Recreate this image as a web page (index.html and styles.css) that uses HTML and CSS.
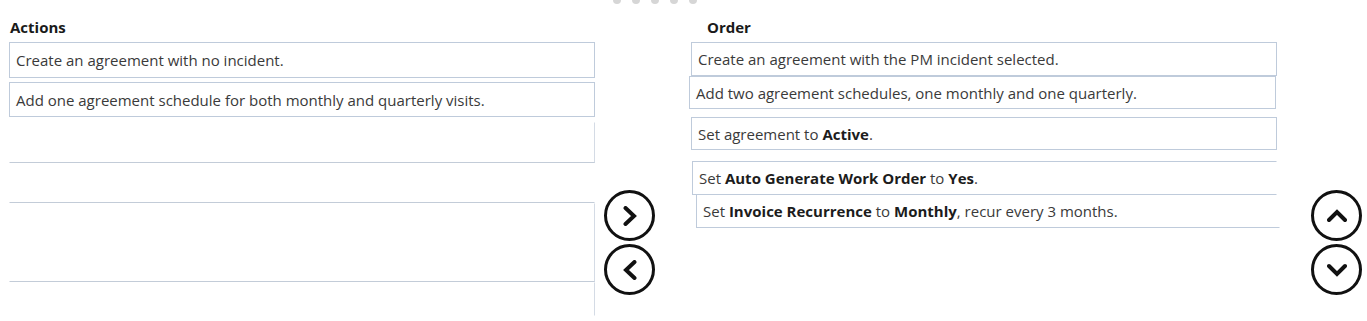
FILE: index.html
```html
<!DOCTYPE html>
<html lang="en">
<head>
  <meta charset="UTF-8">
  <meta name="viewport" content="width=device-width, initial-scale=1.0">
  <title>Agreement steps</title>
  <link rel="stylesheet" href="styles.css">
</head>
<body>
  <div class="loader">
    <span></span><span></span><span></span><span></span><span></span>
  </div>

  <main class="board">
    <section class="pane pane-actions">
      <h2 class="pane-title">Actions</h2>
      <div class="slot slot-1">Create an agreement with no incident.</div>
      <div class="slot slot-2">Add one agreement schedule for both monthly and quarterly visits.</div>
      <div class="slot empty empty-1"></div>
      <div class="slot empty empty-2"></div>
      <div class="slot empty empty-3"></div>
      <div class="slot empty empty-4"></div>
    </section>

    <div class="move-buttons">
      <button class="round" title="Move right">
        <svg viewBox="0 0 20 20" width="20" height="20"><path d="M5.5 2 L14 10 L5.5 18"/></svg>
      </button>
      <button class="round" title="Move left">
        <svg viewBox="0 0 20 20" width="20" height="20"><path d="M14.5 2 L6 10 L14.5 18"/></svg>
      </button>
    </div>

    <section class="pane pane-order">
      <h2 class="pane-title">Order</h2>
      <div class="slot order-1">Create an agreement with the PM incident selected.</div>
      <div class="slot order-2">Add two agreement schedules, one monthly and one quarterly.</div>
      <div class="slot order-3">Set agreement to&nbsp;<b>Active</b>.</div>
      <div class="slot order-4">Set&nbsp;<b>Auto Generate Work Order</b>&nbsp;to&nbsp;<b>Yes</b>.</div>
      <div class="slot order-5">Set&nbsp;<b>Invoice Recurrence</b>&nbsp;to&nbsp;<b>Monthly</b>, recur every 3 months.</div>
    </section>

    <div class="sort-buttons">
      <button class="round" title="Move up">
        <svg viewBox="0 0 20 20" width="20" height="20"><path d="M2 14 L10 6 L18 14"/></svg>
      </button>
      <button class="round" title="Move down">
        <svg viewBox="0 0 20 20" width="20" height="20"><path d="M2 6 L10 14 L18 6"/></svg>
      </button>
    </div>
  </main>
</body>
</html>
```

FILE: styles.css
```css
body {
  margin: 0;
  background: #fff;
  font-family: "Open Sans", "Noto Sans", Arial, sans-serif;
  font-size: 15px;
  color: #3a3a3a;
}

.loader {
  position: absolute;
  top: -4px;
  left: 613px;
  display: flex;
  gap: 11px;
}

.loader span {
  width: 8px;
  height: 8px;
  border-radius: 50%;
  background: #d6d6d6;
}

.board {
  display: flex;
  align-items: flex-start;
  padding-top: 17px;
}

.pane-title {
  margin: 0 0 5px;
  font-size: 15px;
  line-height: 20px;
  font-weight: bold;
  color: #1a1a1a;
}

.pane-actions {
  margin-left: 9px;
  width: 586px;
}

.pane-actions .pane-title {
  padding-left: 1px;
}

.slot {
  box-sizing: border-box;
  display: flex;
  align-items: center;
  border: 1px solid #bfcbdb;
  padding: 0 6px;
  white-space: nowrap;
}

.slot b {
  color: #1c1c1c;
}

.slot-1 {
  height: 36px;
  margin-bottom: 4px;
}

.slot-2 {
  height: 35px;
  margin-bottom: 5px;
}

.empty {
  border-color: transparent;
}

.empty-1 {
  height: 41px;
  border-right-color: #d4dbe5;
  border-bottom-color: #c3ccd8;
}

.empty-2 {
  height: 40px;
  border-bottom-color: #c3ccd8;
}

.empty-3 {
  height: 79px;
  border-right-color: #d4dbe5;
  border-bottom-color: #c3ccd8;
}

.empty-4 {
  height: 34px;
  border-right-color: #d4dbe5;
}

.move-buttons,
.sort-buttons {
  display: flex;
  flex-direction: column;
  gap: 3px;
  margin-top: 173px;
}

.move-buttons {
  width: 85px;
  padding-left: 9px;
}

.sort-buttons {
  margin-left: 31px;
}

.round {
  box-sizing: border-box;
  width: 51px;
  height: 51px;
  padding: 0;
  border: 3px solid #111;
  border-radius: 50%;
  background: #fff;
  display: flex;
  align-items: center;
  justify-content: center;
  cursor: pointer;
}

.round svg {
  width: 20px;
  height: 20px;
  flex: none;
}

.round path {
  fill: none;
  stroke: #111;
  stroke-width: 4;
  stroke-linecap: round;
  stroke-linejoin: miter;
}

.pane-order {
  width: 591px;
}

.pane-order .pane-title {
  padding-left: 18px;
}

.order-1 {
  margin: 1px 0 0 2px;
  width: 586px;
  height: 34px;
}

.order-2 {
  width: 587px;
  height: 33px;
}

.order-3 {
  margin: 8px 0 0 2px;
  width: 586px;
  height: 33px;
}

.order-4 {
  margin: 11px 0 0 3px;
  width: 585px;
  height: 34px;
  border-right-color: transparent;
}

.order-5 {
  margin-left: 7px;
  width: 584px;
  height: 33px;
  border-top: 0;
  border-right-color: transparent;
}
```
